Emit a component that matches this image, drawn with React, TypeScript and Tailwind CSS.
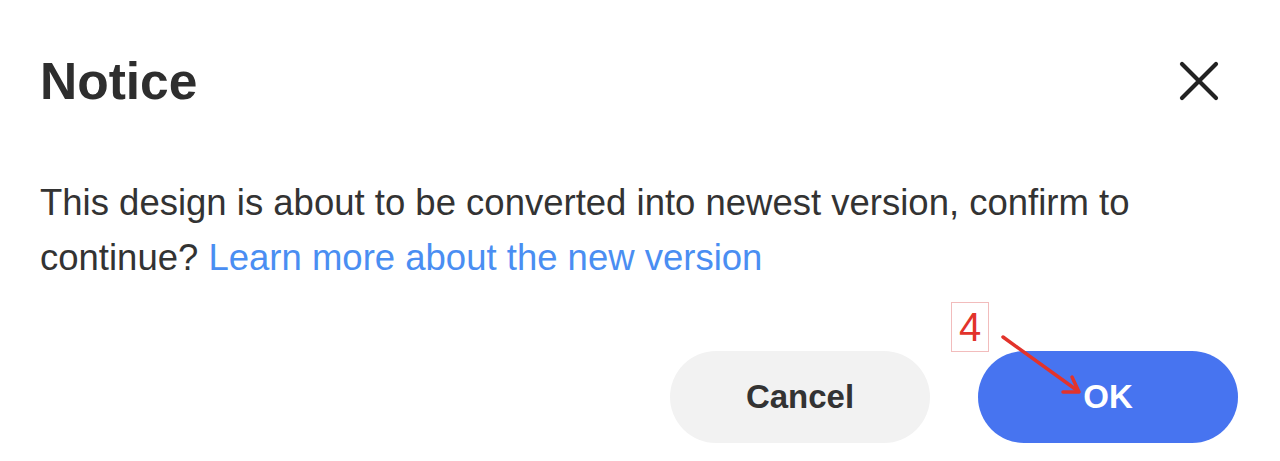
import React from "react";

function CloseIcon() {
  return (
    <svg width="44" height="44" viewBox="0 0 44 44" fill="none" aria-hidden="true">
      <path d="M5 5 L39 39 M39 5 L5 39" stroke="#222222" strokeWidth="4.2" strokeLinecap="round" />
    </svg>
  );
}

export default function App() {
  return (
    <div
      className="relative h-[461px] w-full overflow-hidden bg-white text-[#333333]"
      style={{ fontFamily: '"Liberation Sans", Arial, sans-serif' }}
    >
      <div className="flex flex-col pl-[40px] pr-[42px] pt-[56px]">
        <div className="flex items-start justify-between">
          <h1 className="text-[51.5px] font-bold leading-[50px] text-[#2e2e2e]">Notice</h1>
          <button className="mr-[17px] mt-[3px] flex h-[44px] w-[44px] items-center justify-center">
            <CloseIcon />
          </button>
        </div>

        <p className="mt-[69px] text-[36.5px] leading-[55px] text-[#333333]">
          This design is about to be converted into newest version, confirm to continue?{" "}
          <a className="text-[#4a8ef2]">Learn more about the new version</a>
        </p>

        <div className="mt-[66px] flex justify-end gap-[48px]">
          <button className="flex h-[92px] w-[260px] items-center justify-center rounded-full bg-[#f2f2f2] text-[33px] font-bold text-[#333333]">
            Cancel
          </button>
          <button className="flex h-[92px] w-[260px] items-center justify-center rounded-full bg-[#4774f0] text-[33px] font-bold text-white">
            OK
          </button>
        </div>
      </div>

      {/* annotation overlay */}
      <div className="absolute left-[951px] top-[302px] flex h-[50px] w-[38px] items-center justify-center border border-[#f2bcbc] text-[40px] leading-none text-[#e2332b]">
        4
      </div>
      <svg
        className="pointer-events-none absolute left-0 top-0"
        width="1280"
        height="461"
        viewBox="0 0 1280 461"
        fill="none"
        aria-hidden="true"
      >
        <path d="M1003 337 L1078 391" stroke="#e2332b" strokeWidth="3.5" strokeLinecap="round" />
        <path d="M1072 377 L1079 392 L1063 392" stroke="#e2332b" strokeWidth="3.5" strokeLinecap="round" strokeLinejoin="round" />
      </svg>
    </div>
  );
}
